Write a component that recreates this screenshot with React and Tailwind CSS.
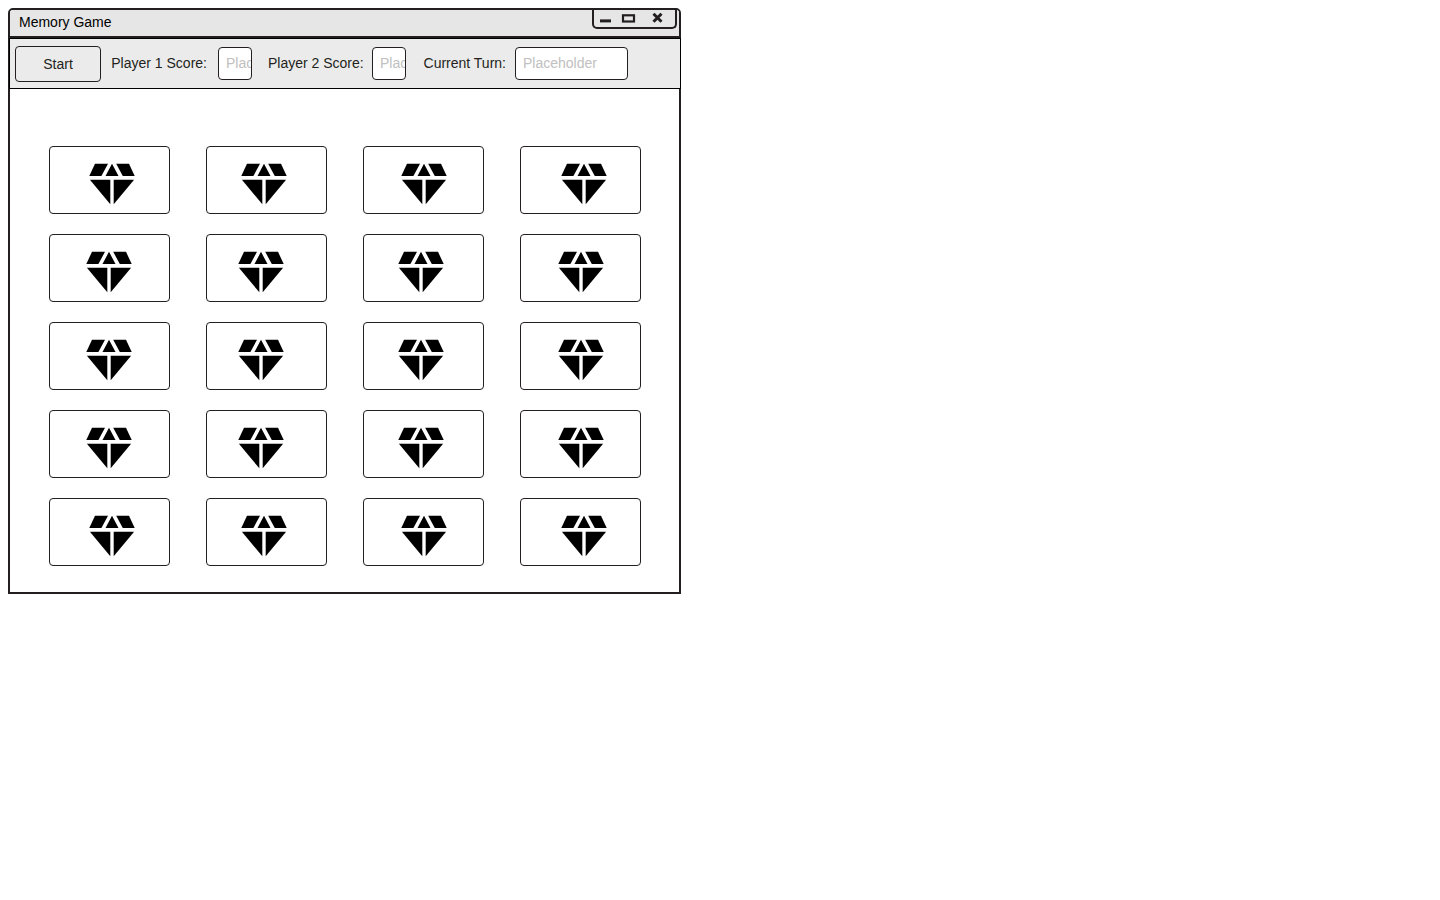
import React from "react";

const ROWS = 5;
const EDGE_ROW = ["pl-[39px]", "pl-[34px]", "pl-[37px]", "pl-[40px]"];
const INNER_ROW = ["pl-[36px]", "pl-[31px]", "pl-[34px]", "pl-[37px]"];

function Diamond() {
  return (
    <svg width="46" height="42" viewBox="0 0 46 42" fill="#000" aria-hidden="true">
      <path d="M6 0.8H19L12.4 12.9H0.3Z" />
      <path d="M23 0.8L29.5 12.9H16.5Z" />
      <path d="M27.2 0.8H40L45.7 12.9H33.8Z" />
      <path d="M0.9 16.8H21.3V41.3Z" />
      <path d="M24.7 16.8H45.1L24.7 41.3Z" />
    </svg>
  );
}

function TitleBar() {
  return (
    <header className="flex h-7 items-start justify-between rounded-t-[3px] border-b-2 border-[#231f20] bg-[#e6e6e6] pl-[9px] pr-0.5">
      <h1 className="pt-px text-[14px] leading-[22px] text-black">Memory Game</h1>
      <div className="flex h-[19px] w-[85px] items-start rounded-b-[5px] border-2 border-t-0 border-[#231f20] text-[#231f20]">
        <button type="button" aria-label="Minimize" className="h-4 w-[23px]">
          <svg width="23" height="16" viewBox="0 0 23 16" aria-hidden="true">
            <path d="M6 10.9H17" stroke="currentColor" strokeWidth="3" />
          </svg>
        </button>
        <button type="button" aria-label="Maximize" className="h-4 w-[23px]">
          <svg width="23" height="16" viewBox="0 0 23 16" aria-hidden="true">
            <rect x="6" y="5.3" width="11" height="6.2" fill="none" stroke="currentColor" strokeWidth="2.2" />
          </svg>
        </button>
        <button type="button" aria-label="Close" className="h-4 w-[35px]">
          <svg width="35" height="16" viewBox="0 0 35 16" aria-hidden="true">
            <path d="M13.5 3.8L21.5 11.8M21.5 3.8L13.5 11.8" stroke="currentColor" strokeWidth="3" />
          </svg>
        </button>
      </div>
    </header>
  );
}

function Field({ id, label, labelClass, width }) {
  return (
    <div className="flex items-start">
      <label
        htmlFor={id}
        className={`whitespace-nowrap text-right text-[14px] leading-8 text-[#231f20] ${labelClass}`}
      >
        {label}
      </label>
      <input
        id={id}
        type="text"
        placeholder="Placeholder"
        className={`h-[33px] ${width} rounded border border-[#231f20] bg-white pb-0.5 pl-[7px] text-[14px] text-[#231f20] outline-none placeholder:text-[#c0c0c0]`}
      />
    </div>
  );
}

function Toolbar() {
  return (
    <div className="-ml-px -mr-0.5 flex h-[51px] items-start border border-black bg-[#ebebeb] pl-[5px] pt-[7px]">
      <button
        type="button"
        className="mr-[10px] h-9 w-[86px] rounded border border-[#231f20] text-[14px] text-[#231f20]"
      >
        Start
      </button>
      <div className="flex gap-4 pt-px">
        <Field id="player-one" label="Player 1 Score:" labelClass="w-[107px] pr-[11px]" width="w-[34px]" />
        <Field id="player-two" label="Player 2 Score:" labelClass="w-[104px] pr-[9px]" width="w-[34px]" />
        <Field id="turn" label="Current Turn:" labelClass="w-[93px] pr-[9px]" width="w-[113px]" />
      </div>
    </div>
  );
}

export default function App() {
  return (
    <div className="p-2 font-['Liberation_Sans',Arial,sans-serif]">
      <main className="w-fit rounded-t-[5px] border-2 border-[#231f20] bg-white">
        <TitleBar />
        <Toolbar />
        <div className="grid grid-cols-[repeat(4,121px)] gap-x-9 gap-y-5 pb-[26px] pl-[39px] pr-[38px] pt-[57px]">
          {Array.from({ length: ROWS }, (_, row) =>
            (row === 0 || row === ROWS - 1 ? EDGE_ROW : INNER_ROW).map((inset, col) => (
              <button
                key={`${row}-${col}`}
                type="button"
                aria-label={`Card ${row * 4 + col + 1}`}
                className={`flex h-[68px] items-start rounded border border-[#231f20] bg-white pt-4 ${inset}`}
              >
                <Diamond />
              </button>
            ))
          )}
        </div>
      </main>
    </div>
  );
}
